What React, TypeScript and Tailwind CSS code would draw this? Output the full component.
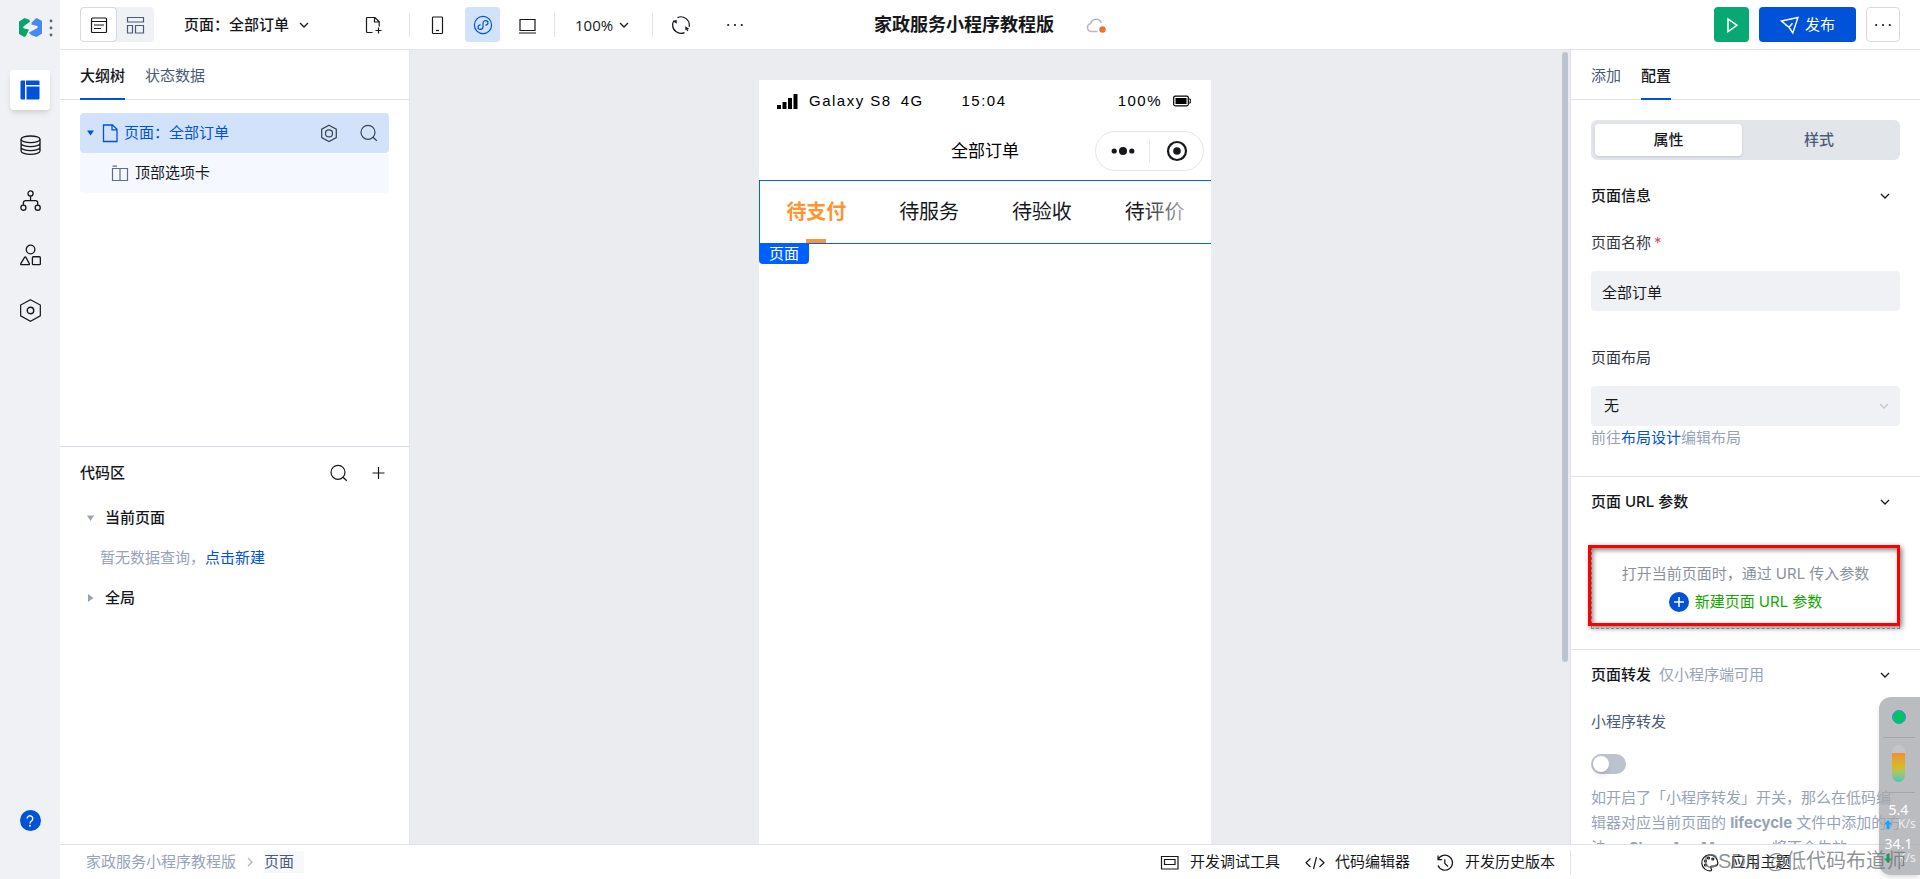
import { useState } from "react";
import type { ReactNode } from "react";

type IconProps = { size?: number; className?: string; children: ReactNode };

function Icon({ size = 20, className = "", children }: IconProps) {
  return (
    <svg
      width={size}
      height={size}
      viewBox="0 0 20 20"
      fill="none"
      stroke="currentColor"
      strokeWidth="1.2"
      className={`shrink-0 ${className}`}
      aria-hidden="true"
    >
      {children}
    </svg>
  );
}

function Chevron({ className = "" }: { className?: string }) {
  return (
    <svg width="10" height="10" viewBox="0 0 10 10" fill="none" stroke="currentColor" strokeWidth="1.3" className={`shrink-0 ${className}`} aria-hidden="true">
      <path d="M1 3l4 4 4-4" />
    </svg>
  );
}

function Search() {
  return (
    <Icon>
      <circle cx="9" cy="9.3" r="7" />
      <path d="M14 14.3l3.8 3.5" />
    </Icon>
  );
}

function Dots() {
  return (
    <Icon>
      <g fill="currentColor" stroke="none">
        <circle cx="3.2" cy="10" r="1.1" />
        <circle cx="10" cy="10" r="1.1" />
        <circle cx="16.8" cy="10" r="1.1" />
      </g>
    </Icon>
  );
}

function Divider() {
  return <div className="h-6 w-px bg-[#e0e3e9]" />;
}

function Rail() {
  const item = "flex size-10 items-center justify-center rounded";
  return (
    <nav className="flex w-[60px] shrink-0 flex-col items-center bg-[#f0f1f5] text-[#16181c]">
      <div className="flex w-full items-center pt-[17px] pl-[18px]">
        <svg width="25" height="21" viewBox="0 0 25 21" aria-hidden="true">
          <path d="M1 4.500 6.500 1l4.800 1.800.7 2-6 4.200c-1.300 1-1 2.200.4 2.500l4.500 1.100-.6 1.500L7.800 19l-1.500 1L1 17z" fill="#07a46d" />
          <path d="M24 16.500 18.500 20l-4.800-1.800-3-2.400 8.300-4.600c1.300-1 1-2.200-.4-2.500l-5.200-1.300.3-1.800L17.200 2l1.500-1L24 4z" fill="#4789f1" />
        </svg>
        <svg width="4" height="20" viewBox="0 0 4 20" className="ml-[6px] fill-[#5b6577]" aria-hidden="true">
          <circle cx="2" cy="3" r="1.4" />
          <circle cx="2" cy="10" r="1.4" />
          <circle cx="2" cy="17" r="1.4" />
        </svg>
      </div>
      <div className="mt-8 flex flex-col gap-[15px]">
        <button className={`${item} bg-white text-[#0052d9] shadow-md`} aria-label="页面">
          <svg width="20" height="20" viewBox="0 0 20 20" fill="currentColor" aria-hidden="true">
            <path d="M1.5.5H5v19H1.5a1 1 0 0 1-1-1v-17a1 1 0 0 1 1-1zM6 .5h12.500a1 1 0 0 1 1 1V5H6zM6.500 6.500h13v12a1 1 0 0 1-1 1h-12z" />
          </svg>
        </button>
        <button className={item} aria-label="数据">
          <Icon size={22}>
            <ellipse cx="10.500" cy="4.800" rx="8.600" ry="3" />
            <path d="M1.900 4.800v10.700c0 1.700 3.900 3.100 8.600 3.100s8.600-1.400 8.600-3.100V4.800M1.900 8.400c0 1.700 3.900 3.100 8.600 3.100s8.600-1.400 8.600-3.100M1.900 12c0 1.700 3.900 3.100 8.600 3.100s8.600-1.400 8.600-3.100" />
          </Icon>
        </button>
        <button className={item} aria-label="流程">
          <Icon size={22}>
            <circle cx="10.500" cy="4" r="2.300" />
            <circle cx="4" cy="17" r="2.300" />
            <circle cx="17" cy="17" r="2.300" />
            <path d="M10.500 6.300v4.200M4 14.700v-2.200a2 2 0 0 1 2-2h9a2 2 0 0 1 2 2v2.200" />
          </Icon>
        </button>
        <button className={item} aria-label="组件">
          <Icon size={22}>
            <circle cx="10.500" cy="5" r="3.900" />
            <path d="M5.200 12a.6.6 0 0 1 1 0l3.200 5.900a.6.6 0 0 1-.5.900H2.100a.6.6 0 0 1-.5-.9z" />
            <rect x="12.200" y="11.600" width="7.200" height="7.200" rx=".8" />
          </Icon>
        </button>
        <button className={item} aria-label="设置">
          <Icon size={24}>
            <path d="M10.400 1.400l8.200 4.500v9l-8.200 4.500-8.200-4.500v-9z" strokeWidth="1" />
            <circle cx="10.400" cy="10.400" r="2.700" />
          </Icon>
        </button>
      </div>
      <button className="mt-auto mb-12 flex size-[21px] items-center justify-center rounded-full bg-[#0052d9] text-white" aria-label="帮助">
        <Icon size={16}>
          <path d="M6.500 7a3.500 3.500 0 1 1 5.800 2.600c-1.300 1.100-2.300 1.600-2.300 3.400" strokeWidth="1.700" />
          <circle cx="10" cy="16" r="1.200" fill="currentColor" stroke="none" />
        </Icon>
      </button>
    </nav>
  );
}

function Header() {
  return (
    <header className="flex h-[50px] shrink-0 items-center border-b border-[#e0e3e9] bg-white px-5 text-[#16181c]">
      <div className="flex flex-1 items-center">
        <div className="flex rounded bg-[#f0f1f5]">
          <button className="flex h-[35px] w-[37px] items-center justify-center rounded border border-[#d5d9e2] bg-white" aria-label="列表">
            <Icon>
              <rect x="2.500" y="3" width="15" height="14.500" rx="1" />
              <path d="M2.500 6.500h15M5 10h10M5 13.500h7" />
            </Icon>
          </button>
          <button className="flex h-[35px] w-[37px] items-center justify-center text-[#4b5b76]" aria-label="布局">
            <Icon>
              <path d="M1.500 2.500h16V7h-16zM1.500 10.500h5v7.500h-5zM9.500 10.500h8v7.500h-8z" />
            </Icon>
          </button>
        </div>
        <button className="ml-[30px] flex items-center gap-[10px] font-medium">
          页面：全部订单
          <Chevron />
        </button>
        <button className="ml-[55px]" aria-label="新建页面">
          <Icon>
            <path d="M8.500 17.500h-5a1 1 0 0 1-1-1v-13a1 1 0 0 1 1-1H11l4.200 4.300v4.700M10.500 2.500V7h4.700M14.500 12.500v6M11.500 15.500h6" />
          </Icon>
        </button>
        <div className="ml-[25px] flex items-center">
          <Divider />
          <button className="ml-[18px]" aria-label="手机">
            <Icon>
              <rect x="4.500" y="2" width="10" height="16.500" rx=".8" />
              <path d="M8 15.500h3" />
            </Icon>
          </button>
          <button className="ml-[17px] flex size-[35px] items-center justify-center rounded bg-[#d3e2fb] text-[#0052d9]" aria-label="小程序">
            <Icon>
              <circle cx="10" cy="10" r="8.600" />
              <path d="M7.600 9.800c-1.600.2-2.600 1.200-2.600 2.400 0 1.300 1 2.100 2.300 2.100 1.500 0 2.700-1 2.700-2.400V8.100c0-1.400 1.200-2.400 2.700-2.400 1.300 0 2.300.8 2.300 2.100 0 1.200-1 2.200-2.600 2.400" />
            </Icon>
          </button>
          <button className="ml-[17px]" aria-label="电脑">
            <Icon>
              <path d="M3 4.500h15v11H3zM2 18h17" />
            </Icon>
          </button>
          <div className="ml-[17px]">
            <Divider />
          </div>
          <button className="ml-5 flex items-center gap-[6px] font-['Open_Sans','Noto_Sans_CJK_SC',sans-serif]">
            100%
            <Chevron />
          </button>
          <div className="ml-[23px]">
            <Divider />
          </div>
          <button className="ml-[18px]" aria-label="刷新">
            <Icon>
              <path d="M6.500 2.600a8.300 8.300 0 0 1 11.600 9.200M13.500 17.600A8.300 8.300 0 0 1 1.900 8.400M2.300 13.200A8.300 8.300 0 0 1 3 5.500M17 14.600a8 8 0 0 1-1 1.200" />
              <path d="M1.800 6.200L5.600 4.800l.2 4zM18.200 13.800l-3.800 1.400-.2-4z" fill="currentColor" stroke="none" />
            </Icon>
          </button>
          <button className="ml-[34px]" aria-label="更多">
            <Dots />
          </button>
        </div>
      </div>
      <div className="flex items-center gap-8">
        <h1 className="text-[18px] leading-6 font-bold">家政服务小程序教程版</h1>
        <Icon className="text-[#b0b8c8]">
          <path d="M11.500 16.500H5.200a4 4 0 0 1-.5-7.900 5.500 5.500 0 0 1 10.600-.5" strokeWidth="1.500" />
          <circle cx="16.500" cy="14.500" r="3.200" fill="#ed7233" stroke="none" />
        </Icon>
      </div>
      <div className="flex flex-1 items-center justify-end gap-[10px]">
        <button className="flex size-[35px] items-center justify-center rounded bg-[#07a871] text-white" aria-label="预览">
          <Icon>
            <path d="M6 4v12.500l9-6.200z" strokeWidth="1.500" />
          </Icon>
        </button>
        <button className="flex h-[35px] w-[97px] items-center justify-center gap-[5px] rounded bg-[#0052d9] text-white">
          <Icon>
            <path d="M1.500 6l16.500-3.500-5.200 15.500-3.800-5.700zM9 12.300l3.500-4M5 9.500l4 2.800" strokeWidth="1.400" />
          </Icon>
          发布
        </button>
        <button className="flex h-[35px] w-[34px] items-center justify-center rounded border border-[#d5d9e2]" aria-label="更多操作">
          <Dots />
        </button>
      </div>
    </header>
  );
}

function Tab({ active, children }: { active?: boolean; children: ReactNode }) {
  return (
    <button
      className={`-mb-px h-[50px] border-b-2 pt-1 ${active ? "border-[#0052d9] font-medium text-[#16181c]" : "border-transparent text-[#4b5b76]"}`}
    >
      {children}
    </button>
  );
}

function LeftPanel() {
  return (
    <aside className="flex w-[350px] shrink-0 flex-col border-r border-[#e0e3e9] bg-white">
      <section className="min-h-0 flex-1">
        <div className="flex h-[50px] gap-5 border-b border-[#e0e3e9] px-5">
          <Tab active>大纲树</Tab>
          <Tab>状态数据</Tab>
        </div>
        <div className="mx-5 mt-[13px]">
          <div className="flex h-10 items-center rounded bg-[#d3e2fb] pr-[10px] pl-[7px] text-[#0052d9]">
            <svg width="7" height="6" viewBox="0 0 7 6" fill="currentColor" aria-hidden="true">
              <path d="M0 .5h7l-3.500 5z" />
            </svg>
            <Icon className="ml-[6px]">
              <path d="M3.500 2h9L17 6.300v12.200H3.500zM12 2v4.800h5" strokeWidth="1.300" />
            </Icon>
            <span className="ml-1">页面：全部订单</span>
            <div className="ml-auto flex gap-5 text-[#3b434f]">
              <button aria-label="页面设置">
                <Icon>
                  <path d="M10 2.200l7.300 4v8.400l-7.300 4-7.300-4V6.200z" />
                  <circle cx="10" cy="10.400" r="3.500" />
                </Icon>
              </button>
              <button aria-label="搜索节点">
                <Search />
              </button>
            </div>
          </div>
          <div className="flex h-10 items-center gap-[5px] rounded bg-[#f5f8ff] pl-[30px] text-[#16181c]">
            <Icon className="text-[#5f6d86]">
              <path d="M2.500 5.500h15v12h-15zM10 5.500v12M2.500 3.200h4.500" />
            </Icon>
            顶部选项卡
          </div>
        </div>
      </section>
      <section className="min-h-0 flex-1 border-t border-[#d5d9e2] px-5 pt-px text-[#16181c]">
        <div className="flex h-[50px] items-center">
          <h2 className="font-medium">代码区</h2>
          <div className="ml-auto flex gap-5">
            <button aria-label="搜索代码">
              <Search />
            </button>
            <button aria-label="新建代码">
              <Icon>
                <path d="M9.500 4v12M3.500 10h12" />
              </Icon>
            </button>
          </div>
        </div>
        <div className="flex h-10 items-center gap-[11px] pl-[7px] font-medium">
          <svg width="7" height="6" viewBox="0 0 7 6" className="fill-[#97a3b7]" aria-hidden="true">
            <path d="M0 .5h7L3.500 6z" />
          </svg>
          当前页面
        </div>
        <p className="flex h-10 items-center pl-5 text-[#97a3b7]">
          暂无数据查询，
          <a href="#new" className="text-[#0052d9]">
            点击新建
          </a>
        </p>
        <div className="flex h-10 items-center gap-[11px] pl-[7px] font-medium">
          <svg width="7" height="8" viewBox="0 0 7 8" className="fill-[#97a3b7]" aria-hidden="true">
            <path d="M1 0v8l5.500-4z" />
          </svg>
          全局
        </div>
      </section>
    </aside>
  );
}

const orderTabs = ["待支付", "待服务", "待验收", "待评价"];

function Canvas() {
  return (
    <main className="flex min-w-0 flex-1 bg-[#ebecf0]">
      <div className="flex flex-1 justify-center overflow-hidden pt-[30px]">
        <div className="flex w-[452px] flex-col bg-white text-black">
          <div className="flex h-[42px] items-center pr-[20px] pl-[18px] font-['Liberation_Sans',sans-serif] text-[15px] tracking-widest">
            <div className="flex flex-1 items-center">
              <svg width="21" height="15" viewBox="0 0 21 15" className="mr-[11px]" aria-hidden="true">
                <path d="M0 11h4v4H0zM5.500 8h4v7h-4zM11 4h4v11h-4zM16.500 0h4v15h-4z" />
              </svg>
              <span>Galaxy S8</span>
              <span className="ml-[9px]">4G</span>
            </div>
            <span>15:04</span>
            <div className="flex flex-1 items-center justify-end">
              <span>100%</span>
              <svg width="18" height="12" viewBox="0 0 18 12" className="ml-[11px]" aria-hidden="true">
                <rect x=".7" y="1.200" width="14.600" height="9.600" rx="1.500" fill="none" stroke="#000" strokeWidth="1.200" />
                <rect x="2.500" y="3" width="11" height="6" />
                <path d="M15.500 4h1.800v4h-1.800" fill="none" stroke="#000" />
              </svg>
            </div>
          </div>
          <div className="grid h-[58px] grid-cols-[1fr_auto_1fr] items-center px-[7px]">
            <span className="col-start-2 text-[17px]">全部订单</span>
            <div className="flex h-10 w-[109px] items-center justify-self-end rounded-full border border-[#e5e6eb]">
              <button className="flex flex-1 justify-center" aria-label="菜单">
                <svg width="24" height="10" viewBox="0 0 24 10" className="fill-[#16181c]" aria-hidden="true">
                  <circle cx="3.200" cy="5" r="2.600" />
                  <circle cx="12" cy="5" r="4" />
                  <circle cx="20.800" cy="5" r="2.600" />
                </svg>
              </button>
              <div className="h-6 w-px bg-[#e9eaee]" />
              <button className="flex flex-1 justify-center" aria-label="关闭">
                <svg width="22" height="22" viewBox="0 0 22 22" aria-hidden="true">
                  <circle cx="11" cy="11" r="9" fill="none" stroke="#16181c" strokeWidth="2.200" />
                  <circle cx="11" cy="11" r="3.800" fill="#16181c" />
                </svg>
              </button>
            </div>
          </div>
          <div className="relative grid h-16 grid-cols-4 border-y border-l border-[#0060ff]">
            {orderTabs.map((tab, i) => (
              <button
                key={tab}
                className={`flex flex-col items-center text-[20px] ${i === 0 ? "font-bold text-[#ff9431]" : "text-[#16181c]"}`}
              >
                <span className="pt-[17px] leading-7">{tab}</span>
                {i === 0 && <span className="mt-auto h-1 w-5 bg-[#ff9431]" />}
              </button>
            ))}
            <div className="absolute inset-y-0 right-0 w-[72px] bg-linear-to-r from-white/0 to-white" />
            <span className="absolute top-full -left-px flex h-[21px] w-[50px] items-center justify-center rounded-b bg-[#0060ff] text-[15px] text-white">
              页面
            </span>
          </div>
        </div>
      </div>
      <div className="flex w-[10px] justify-center pt-[2px]">
        <div className="h-[77%] w-[6px] rounded-full bg-[#bbc3cf]" />
      </div>
    </main>
  );
}

function SectionTitle({ note, children }: { note?: string; children: ReactNode }) {
  return (
    <div className="flex h-[50px] items-center pr-[10px]">
      <h2 className="font-medium">{children}</h2>
      {note && <span className="ml-2 text-[#97a3b7]">{note}</span>}
      <Chevron className="ml-auto" />
    </div>
  );
}

function ConfigPanel() {
  const [name, setName] = useState("全部订单");
  const [share, setShare] = useState(false);

  return (
    <aside className="w-[350px] shrink-0 overflow-hidden border-l border-[#e0e3e9] bg-white text-[#16181c]">
      <div className="flex h-[50px] gap-5 border-b border-[#e0e3e9] px-5">
        <Tab>添加</Tab>
        <Tab active>配置</Tab>
      </div>
      <div className="border-b border-[#e0e3e9] px-5 pt-5 pb-[26px]">
        <div className="flex h-10 rounded-md bg-[#e2e5ea] p-1 font-medium">
          <button className="w-[147px] rounded-sm bg-white shadow-sm">属性</button>
          <button className="flex-1 text-[#4b5b76]">样式</button>
        </div>
        <div className="pt-[11px]">
          <SectionTitle>页面信息</SectionTitle>
        </div>
        <label htmlFor="page-name" className="flex h-11 items-center gap-[3px] text-[#33373f]">
          页面名称 <span className="text-[#e34d59]">*</span>
        </label>
        <input
          id="page-name"
          value={name}
          onChange={(e) => setName(e.target.value)}
          className="mt-[6px] h-10 w-full rounded bg-[#f0f1f5] px-[11px]"
        />
        <label htmlFor="page-layout" className="mt-[25px] flex h-11 items-center text-[#33373f]">
          页面布局
        </label>
        <div className="relative mt-[6px]">
          <select id="page-layout" className="h-10 w-full appearance-none rounded bg-[#f0f1f5] px-[13px]">
            <option>无</option>
          </select>
          <Chevron className="absolute top-[15px] right-[11px] text-[#c3c8d2]" />
        </div>
        <p className="leading-6 text-[#97a3b7]">
          前往
          <a href="#layout" className="text-[#0052d9]">
            布局设计
          </a>
          编辑布局
        </p>
      </div>
      <div className="border-b border-[#e0e3e9] px-5 pb-5">
        <SectionTitle>页面 URL 参数</SectionTitle>
        <div className="relative mt-5 flex h-[82px] flex-col items-center justify-center border border-dashed border-[#a3a7ae]">
          <div className="pointer-events-none absolute -top-[3px] -right-px bottom-[2px] -left-1 border-3 border-[#ff0000] shadow-[2px_2px_5px_rgba(0,0,0,0.5),inset_2px_2px_5px_rgba(0,0,0,0.5)]" />
          <p className="leading-7 text-[#8b919c]">打开当前页面时，通过 URL 传入参数</p>
          <button className="flex h-7 items-center gap-[6px] text-[#14a800]">
            <svg width="20" height="20" viewBox="0 0 20 20" aria-hidden="true">
              <circle cx="10" cy="10" r="10" fill="#0052d9" />
              <path d="M10 5v10M5 10h10" stroke="#fff" strokeWidth="1.500" />
            </svg>
            新建页面 URL 参数
          </button>
        </div>
      </div>
      <div className="px-5">
        <SectionTitle note="仅小程序端可用">页面转发</SectionTitle>
        <label htmlFor="share" className="flex h-11 items-center text-[#4b5b76]">
          小程序转发
        </label>
        <div className="mt-[10px] flex">
          <input
            id="share"
            type="checkbox"
            checked={share}
            onChange={(e) => setShare(e.target.checked)}
            className="h-5 w-[35px] appearance-none rounded-full bg-[#bbc3cf] before:m-[2px] before:block before:size-4 before:rounded-full before:bg-white before:shadow-md checked:bg-[#0052d9] checked:before:translate-x-4"
          />
        </div>
        <p className="mt-[11px] -mr-1 leading-[25px] text-[#97a3b7]">
          如开启了「小程序转发」开关，那么在低码编辑器对应当前页面的 <b>lifecycle</b> 文件中添加的方法{" "}
          <b>onShareAppMessage</b> 将不会生效
        </p>
      </div>
    </aside>
  );
}

function Footer() {
  return (
    <footer className="flex h-[35px] shrink-0 items-center border-t border-[#e0e3e9] bg-white text-[#16181c]">
      <nav className="flex items-center pl-[26px] text-[#97a3b7]">
        <a href="#app">家政服务小程序教程版</a>
        <Chevron className="mx-[9px] -rotate-90 text-[#b0b8c8]" />
        <a href="#page" className="bg-[#f7f8fa] pr-[10px] text-[#4b5b76]">
          页面
        </a>
      </nav>
      <div className="ml-auto flex items-center gap-[25px] pr-[15px]">
        <button className="flex items-center gap-[10px]">
          <Icon>
            <path d="M1.500 4.500h16.500v12.500H1.500zM4.500 7.500h10.500v5H4.500z" />
          </Icon>
          开发调试工具
        </button>
        <button className="flex items-center gap-[10px]">
          <Icon>
            <path d="M5.500 6.500L1 10.800l4.500 4.200M14.500 6.500l4.500 4.300-4.500 4.200M11.500 5l-3 12" />
          </Icon>
          代码编辑器
        </button>
        <button className="flex items-center gap-[10px]">
          <Icon>
            <path d="M3.200 7.500a7.500 7.500 0 1 1-.2 6M3 3.500v4.200h4.200M9.800 7.200v4.300l3.200 3" />
          </Icon>
          开发历史版本
        </button>
      </div>
      <div className="flex w-[350px] items-center justify-center">
        <Divider />
        <button className="flex flex-1 items-center justify-center gap-[10px]">
          <Icon>
            <path d="M11 18.700a8 8 0 1 1 6.800-8c0 2.300-1.500 3.300-3.300 3.300h-2.300c-1.800 0-1.900 1.500-1.200 2.300.7 1 .7 2.100 0 2.400z" />
            <circle cx="5.500" cy="9" r="1" />
            <circle cx="8.500" cy="6" r="1" />
            <circle cx="12.800" cy="7" r="1" />
            <circle cx="5.500" cy="13" r="1" />
          </Icon>
          应用主题
        </button>
      </div>
    </footer>
  );
}

// Floating system monitor at the right edge of the screen
function Monitor() {
  return (
    <div className="absolute right-0 bottom-1 flex h-[178px] w-[41px] flex-col rounded-l-xl bg-[#a4a6a9]/75 pr-[2px] font-['Noto_Sans',sans-serif] text-white shadow-md">
      <div className="flex flex-col items-center">
        <div className="mt-[13px] size-[14px] rounded-full border border-[#3d8fd0] bg-[#00c364]" />
        <div className="mt-[13px] h-px w-8 bg-[#a4a7ac]" />
        <div className="mt-[7px] h-[37px] w-[13px] overflow-hidden rounded-full bg-[#c4c5c8] pt-2">
          <div className="h-full bg-linear-to-b from-[#f09034] via-[#d0bd25] to-[#35c5bb]" />
        </div>
        <div className="mt-[10px] h-px w-8 bg-[#a4a7ac]" />
        <span className="mt-[9px] text-[14px] leading-4">5.4</span>
      </div>
      <span className="flex items-center gap-[6px] pl-[5px] text-[12px] leading-3 text-white/75">
        <svg width="8" height="9" viewBox="0 0 9 10" fill="#14a5ff" aria-hidden="true">
          <path d="M4.500 0L9 5H6.200v5H2.800V5H0z" />
        </svg>
        K/s
      </span>
      <span className="mt-[6px] text-center text-[14px] leading-4">34.1</span>
      <span className="flex items-center gap-[6px] pl-[5px] text-[12px] leading-3 text-white/75">
        <svg width="8" height="9" viewBox="0 0 9 10" fill="#10a658" aria-hidden="true">
          <path d="M4.500 10L0 5h2.800V0h3.400v5H9z" />
        </svg>
        K/s
      </span>
    </div>
  );
}

export default function App() {
  return (
    <div className="relative flex h-screen overflow-hidden bg-white font-['Inter','Noto_Sans_CJK_SC',sans-serif] text-[15px] leading-[22px]">
      <Rail />
      <div className="flex min-w-0 flex-1 flex-col">
        <Header />
        <div className="flex min-h-0 flex-1">
          <LeftPanel />
          <Canvas />
          <ConfigPanel />
        </div>
        <Footer />
      </div>
      <Monitor />
      <span className="pointer-events-none absolute right-[14px] bottom-1 font-['Liberation_Sans','Noto_Sans_CJK_SC',sans-serif] text-[20px] leading-7 text-[#6c6f75]/75">
        CSDN @低代码布道师
      </span>
    </div>
  );
}
